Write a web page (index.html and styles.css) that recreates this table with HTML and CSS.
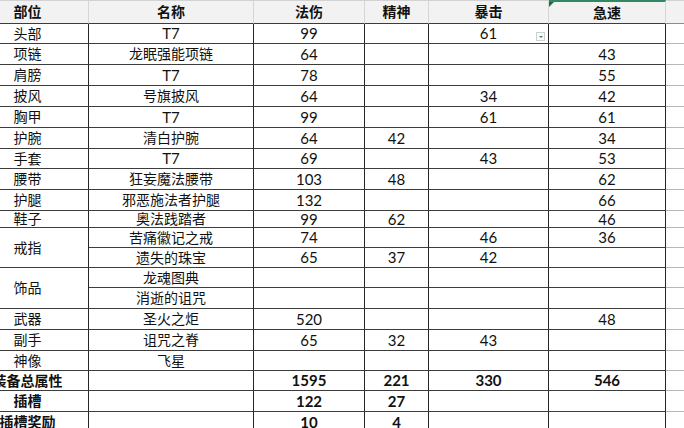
FILE: index.html
```html
<!DOCTYPE html>
<html lang="zh">
<head>
<meta charset="utf-8">
<title>装备属性</title>
<link rel="stylesheet" href="styles.css">
</head>
<body>
<div class="viewport">
  <div class="sheet">
    <div class="c h">部位</div><div class="c h">名称</div><div class="c h">法伤</div><div class="c h">精神</div><div class="c h">暴击</div><div class="c h sel">急速</div><div class="c h x"></div>

    <div class="c">头部</div><div class="c n">T7</div><div class="c n">99</div><div class="c"></div><div class="c n drop">61<span class="dd"></span></div><div class="c"></div><div class="c x"></div>
    <div class="c">项链</div><div class="c">龙眠强能项链</div><div class="c n">64</div><div class="c"></div><div class="c"></div><div class="c n">43</div><div class="c x"></div>
    <div class="c">肩膀</div><div class="c n">T7</div><div class="c n">78</div><div class="c"></div><div class="c"></div><div class="c n">55</div><div class="c x"></div>
    <div class="c">披风</div><div class="c">号旗披风</div><div class="c n">64</div><div class="c"></div><div class="c n">34</div><div class="c n">42</div><div class="c x"></div>
    <div class="c">胸甲</div><div class="c n">T7</div><div class="c n">99</div><div class="c"></div><div class="c n">61</div><div class="c n">61</div><div class="c x"></div>
    <div class="c">护腕</div><div class="c">清白护腕</div><div class="c n">64</div><div class="c n">42</div><div class="c"></div><div class="c n">34</div><div class="c x"></div>
    <div class="c">手套</div><div class="c n">T7</div><div class="c n">69</div><div class="c"></div><div class="c n">43</div><div class="c n">53</div><div class="c x"></div>
    <div class="c">腰带</div><div class="c">狂妄魔法腰带</div><div class="c n">103</div><div class="c n">48</div><div class="c"></div><div class="c n">62</div><div class="c x"></div>
    <div class="c">护腿</div><div class="c">邪恶施法者护腿</div><div class="c n">132</div><div class="c"></div><div class="c"></div><div class="c n">66</div><div class="c x"></div>
    <div class="c">鞋子</div><div class="c">奥法践踏者</div><div class="c n">99</div><div class="c n">62</div><div class="c"></div><div class="c n">46</div><div class="c x"></div>

    <div class="c span2">戒指</div><div class="c">苦痛徽记之戒</div><div class="c n">74</div><div class="c"></div><div class="c n">46</div><div class="c n">36</div><div class="c x"></div>
    <div class="c">遗失的珠宝</div><div class="c n">65</div><div class="c n">37</div><div class="c n">42</div><div class="c"></div><div class="c x"></div>

    <div class="c span2">饰品</div><div class="c">龙魂图典</div><div class="c"></div><div class="c"></div><div class="c"></div><div class="c"></div><div class="c x"></div>
    <div class="c">消逝的诅咒</div><div class="c"></div><div class="c"></div><div class="c"></div><div class="c"></div><div class="c x"></div>

    <div class="c">武器</div><div class="c">圣火之炬</div><div class="c n">520</div><div class="c"></div><div class="c"></div><div class="c n">48</div><div class="c x"></div>
    <div class="c">副手</div><div class="c">诅咒之脊</div><div class="c n">65</div><div class="c n">32</div><div class="c n">43</div><div class="c"></div><div class="c x"></div>
    <div class="c">神像</div><div class="c">飞星</div><div class="c"></div><div class="c"></div><div class="c"></div><div class="c"></div><div class="c x"></div>

    <div class="c b">装备总属性</div><div class="c"></div><div class="c b n">1595</div><div class="c b n">221</div><div class="c b n">330</div><div class="c b n">546</div><div class="c x"></div>
    <div class="c b">插槽</div><div class="c"></div><div class="c b n">122</div><div class="c b n">27</div><div class="c"></div><div class="c"></div><div class="c x"></div>
    <div class="c b">插槽奖励</div><div class="c"></div><div class="c b n">10</div><div class="c b n">4</div><div class="c"></div><div class="c"></div><div class="c x"></div>
  </div>
</div>
</body>
</html>
```

FILE: styles.css
```css
html, body {
  margin: 0;
  padding: 0;
  background: #ffffff;
}

.viewport {
  width: 684px;
  height: 428px;
  overflow: hidden;
}

.sheet {
  display: grid;
  margin-left: -33px;
  width: 800px;
  grid-template-columns: 122px 165px 111px 64px 120px 117px 101px;
  grid-template-rows: 24px 20px 21px 21px 21px 21px 21px 20px 21px 21px 17px 20px 20px 20px 21px 21px 21px 20px 20px 21px 21px 20px;
  font-family: Lato, "Noto Sans CJK SC", sans-serif;
  font-size: 14px;
  line-height: 1;
  color: #111111;
}

.c {
  box-sizing: border-box;
  display: flex;
  align-items: center;
  justify-content: center;
  white-space: nowrap;
  border-right: 1px solid #262626;
  border-bottom: 1px solid #3c3c3c;
}

.n {
  font-size: 15px;
}

.h {
  background: #f2f2f2;
  border-top: 1px solid #d2d2d2;
  border-right: 1px solid #d6d6d6;
  border-bottom: 1px solid #3c3c3c;
  font-weight: 700;
}

.x {
  border-right: none;
  border-bottom: 1px solid #b8b8b8;
}

.h.x {
  border-bottom: 1px solid #8c8c8c;
}

.b {
  font-weight: 700;
}

.span2 {
  grid-row: span 2;
}

.sel {
  position: relative;
  border-top: 2px solid #2f8a63;
}

.sel::before {
  content: "";
  position: absolute;
  left: 0;
  top: 0;
  width: 0;
  height: 0;
  border-top: 5px solid #1f6b48;
  border-right: 5px solid transparent;
}

.drop {
  position: relative;
}

.dd {
  position: absolute;
  right: 3px;
  top: 8px;
  width: 9px;
  height: 9px;
  box-sizing: border-box;
  background: #fafafa;
  border: 1px solid #d0d0d0;
}

.dd::after {
  content: "";
  position: absolute;
  left: 2px;
  top: 3px;
  width: 0;
  height: 0;
  border-left: 2px solid transparent;
  border-right: 2px solid transparent;
  border-top: 2px solid #3d8a68;
}
```
